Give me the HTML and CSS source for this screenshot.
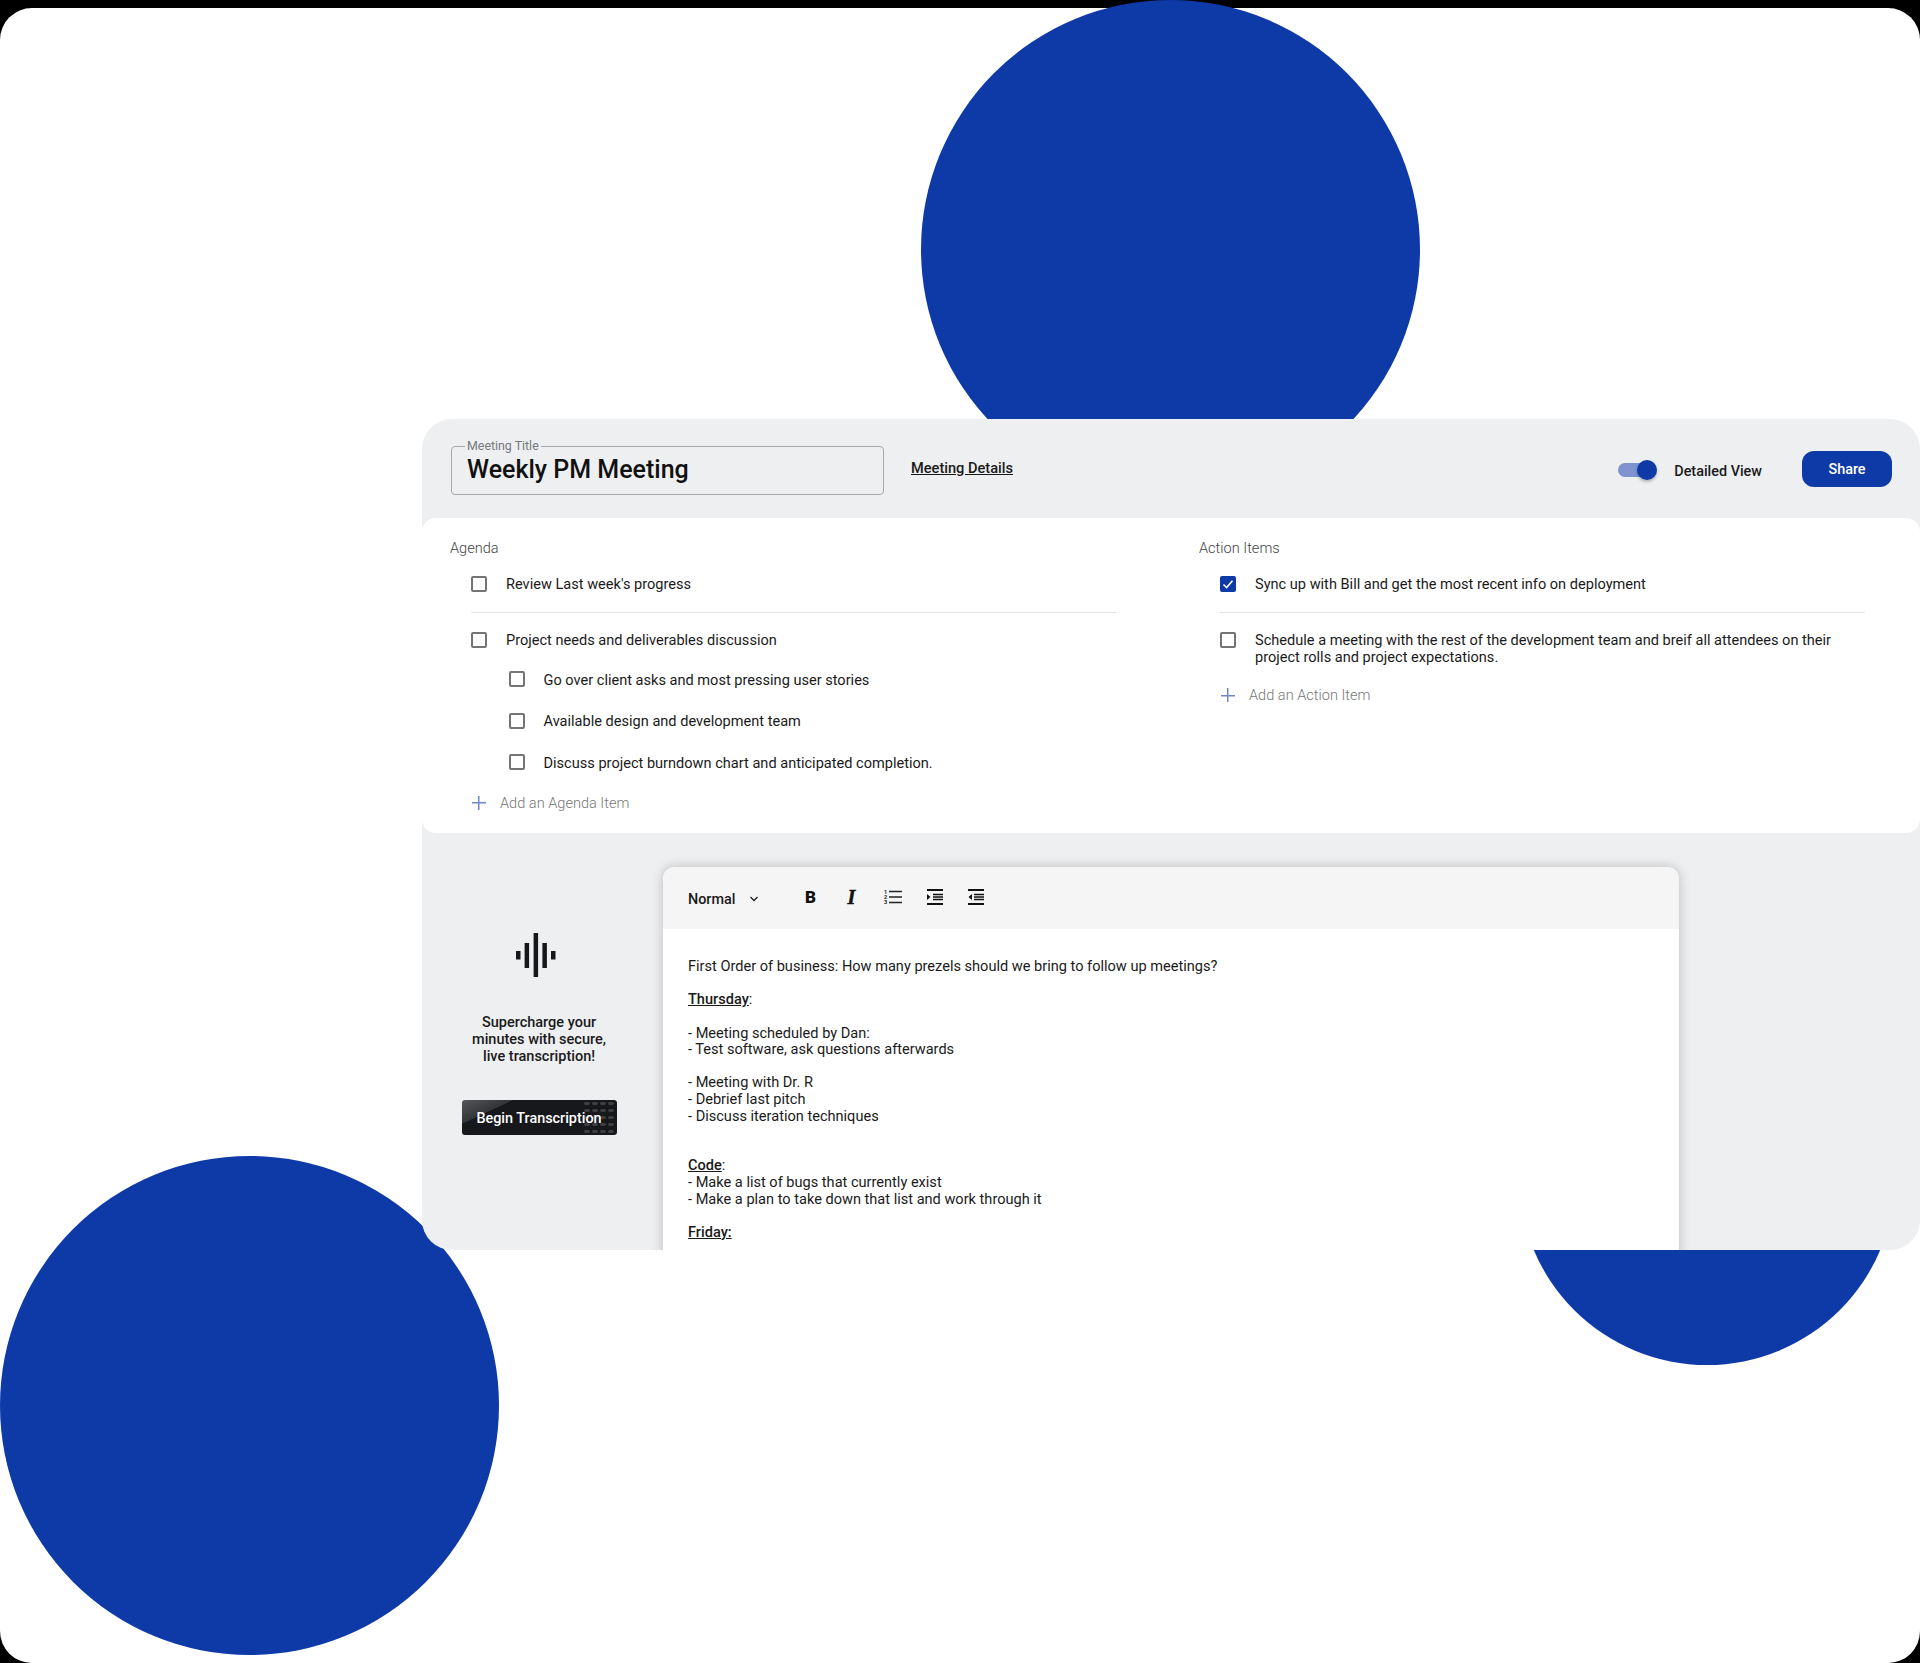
FILE: index.html
```html
<!DOCTYPE html>
<html lang="en">
<head>
    <meta charset="UTF-8">
    <meta name="viewport" content="width=device-width, initial-scale=1.0">
    <title>Weekly PM Meeting</title>
    <link rel="stylesheet" href="styles.css">
</head>
<body>
    <div class="stage">
        <div class="circle circle-top"></div>
        <div class="circle circle-left"></div>
        <div class="circle circle-right"></div>

        <div class="screen">
            <main class="panel">
                <header class="topbar">
                    <fieldset class="title-field">
                        <legend>Meeting Title</legend>
                        <div class="title-text">Weekly PM Meeting</div>
                    </fieldset>
                    <a class="details-link" href="#">Meeting Details</a>
                    <div class="toggle"><span class="toggle-knob"></span></div>
                    <span class="toggle-label">Detailed View</span>
                    <button class="share-btn">Share</button>
                </header>

                <section class="lists">
                    <div class="col">
                        <div class="col-label">Agenda</div>
                        <div class="list">
                            <div class="row"><span class="check"></span>Review Last week's progress</div>
                            <div class="divider"></div>
                            <div class="row after-divider"><span class="check"></span>Project needs and deliverables discussion</div>
                            <div class="row sub first-sub"><span class="check"></span>Go over client asks and most pressing user stories</div>
                            <div class="row sub"><span class="check"></span>Available design and development team</div>
                            <div class="row sub"><span class="check"></span>Discuss project burndown chart and anticipated completion.</div>
                            <div class="add-row add-agenda"><span class="plus"></span>Add an Agenda Item</div>
                        </div>
                    </div>
                    <div class="col">
                        <div class="col-label">Action Items</div>
                        <div class="list">
                            <div class="row">
                                <span class="check checked">
                                    <svg width="12" height="12" viewBox="0 0 12 12"><path d="M1.5 6.5 4.6 9.5 10.5 2.8" fill="none" stroke="#fff" stroke-width="1.6"/></svg>
                                </span>Sync up with Bill and get the most recent info on deployment
                            </div>
                            <div class="divider"></div>
                            <div class="row after-divider"><span class="check"></span><span>Schedule a meeting with the rest of the development team and breif all attendees on their project rolls and project expectations.</span></div>
                            <div class="add-row add-action"><span class="plus"></span>Add an Action Item</div>
                        </div>
                    </div>
                </section>

                <section class="lower">
                    <aside class="transcribe">
                        <svg class="wave" width="40" height="44" viewBox="0 0 40 44">
                            <rect x="0" y="18" width="4.5" height="8.5" />
                            <rect x="8.6" y="10" width="4.5" height="25" />
                            <rect x="17.6" y="0" width="4.5" height="44" />
                            <rect x="26.4" y="10" width="4.5" height="25" />
                            <rect x="35" y="18" width="4.5" height="8.5" />
                        </svg>
                        <p class="pitch">Supercharge your<br>minutes with secure,<br>live transcription!</p>
                        <button class="begin-btn">Begin Transcription</button>
                    </aside>

                    <div class="editor">
                        <div class="toolbar">
                            <span class="format">Normal</span>
                            <svg class="chevron" width="10" height="6" viewBox="0 0 10 6"><path d="M1.5 1 5 4.5 8.5 1" fill="none" stroke="#222" stroke-width="1.3"/></svg>
                            <span class="tool tool-b">B</span>
                            <span class="tool tool-i">I</span>
                            <svg class="tool-icon tool-list" width="18" height="16" viewBox="0 0 18 16">
                                <text x="0" y="4.6" class="tiny">1</text>
                                <text x="0" y="9.8" class="tiny">2</text>
                                <text x="0" y="15" class="tiny">3</text>
                                <path d="M5 2.5H18M5 8H18M5 13.5H18" stroke="#222" stroke-width="1.6"/>
                            </svg>
                            <svg class="tool-icon" width="16" height="16" viewBox="0 0 16 16">
                                <path d="M0 1H16M0 15H16" stroke="#111" stroke-width="2"/>
                                <path d="M6 5.500H16M6 8H16M6 10.500H16" stroke="#111" stroke-width="1.500"/>
                                <path d="M0 5 3.500 8 0 11Z" fill="#111"/>
                            </svg>
                            <svg class="tool-icon" width="16" height="16" viewBox="0 0 16 16">
                                <path d="M0 1H16M0 15H16" stroke="#111" stroke-width="2"/>
                                <path d="M6 5.500H16M6 8H16M6 10.500H16" stroke="#111" stroke-width="1.500"/>
                                <path d="M4 5 0.500 8 4 11Z" fill="#111"/>
                            </svg>
                        </div>
                        <div class="notes">
                            <p>First Order of business: How many prezels should we bring to follow up meetings?</p>
                            <p><b class="head">Thursday</b>:</p>
                            <p>- Meeting scheduled by Dan:<br>- Test software, ask questions afterwards</p>
                            <p>- Meeting with Dr. R<br>- Debrief last pitch<br>- Discuss iteration techniques</p>
                            <p class="gap-top"><b class="head">Code</b>:<br>- Make a list of bugs that currently exist<br>- Make a plan to take down that list and work through it</p>
                            <p><b class="head">Friday:</b></p>
                        </div>
                    </div>
                </section>
            </main>
        </div>
    </div>
</body>
</html>
```

FILE: styles.css
```css
* {
    box-sizing: border-box;
}
body {
    margin: 0;
    background-color: #000;
    font-family: Roboto, 'Liberation Sans', sans-serif;
    font-size: 14.57px;
    line-height: 16.6px;
    color: #1a1a1a;
}
.stage {
    position: relative;
    height: 1663px;
    padding-top: 8px;
    overflow: hidden;
}
.screen {
    height: 1655px;
    padding-top: 411px;
    padding-left: 422px;
    background-color: #fff;
    border-radius: 32px;
}

/* decorative circles */
.circle {
    position: absolute;
    border-radius: 50%;
    background-color: #0e3aa7;
}
.circle-top {
    left: 921px;
    top: 0;
    width: 499px;
    height: 499px;
}
.circle-left {
    left: 0;
    top: 1156px;
    width: 499px;
    height: 499px;
}
.circle-right {
    left: 1519px;
    top: 989px;
    width: 376px;
    height: 376px;
}

.panel {
    position: relative;
    z-index: 1;
    height: 831px;
    background-color: #eeeff1;
    border-radius: 30px;
    overflow: hidden;
}

/* top bar */
.topbar {
    display: flex;
    align-items: center;
    height: 99px;
    padding: 0 28px 0 29px;
}
.title-field {
    width: 433px;
    height: 55px;
    margin: 0;
    padding: 0 15px;
    border: 1px solid #a6a8ac;
    border-radius: 4px;
    position: relative;
    top: -1px;
}
.title-field legend {
    padding: 0 2px;
    margin-left: -2px;
    font-size: 12.4px;
    line-height: 12px;
    color: #77797d;
}
.title-text {
    font-size: 25px;
    font-weight: 500;
    line-height: 34px;
    color: #111;
    margin-top: 1px;
}
.details-link {
    margin-left: 27px;
    margin-top: -1px;
    font-size: 14.6px;
    font-weight: 500;
    color: #1a1a1a;
}
.toggle {
    position: relative;
    width: 39px;
    height: 14px;
    margin-left: auto;
    margin-top: 2px;
    border-radius: 7px 0 0 7px;
    background: linear-gradient(to right, #7e93cf 82%, transparent 82%);
}
.toggle-knob {
    position: absolute;
    right: 0;
    top: -3px;
    width: 20px;
    height: 20px;
    border-radius: 50%;
    background-color: #0e3aa7;
    box-shadow: 0 2px 3px rgba(0, 0, 0, 0.25);
}
.toggle-label {
    margin-left: 17px;
    margin-top: 7px;
    font-size: 14.4px;
    font-weight: 500;
}
.share-btn {
    width: 90px;
    height: 36px;
    margin-left: 40px;
    margin-top: 1.500px;
    border: none;
    border-radius: 12px;
    background-color: #0e3aa7;
    color: #fff;
    font-family: inherit;
    font-size: 14.4px;
    font-weight: 500;
}

/* agenda + action items */
.lists {
    display: grid;
    grid-template-columns: 749px 1fr;
    height: 315px;
    padding: 22px 0 0 28px;
    background-color: #fff;
    border-radius: 14px;
}
.col-label {
    font-weight: 300;
    line-height: 17px;
    color: #444;
}
.list {
    width: 645px;
    margin-left: 21px;
}
.row {
    display: flex;
    margin-top: 19.400px;
    padding-right: 20px;
}
.after-divider {
    margin-top: 19.200px;
}
.check {
    flex: none;
    display: flex;
    align-items: center;
    justify-content: center;
    width: 16px;
    height: 16px;
    margin-top: -0.400px;
    margin-right: 19px;
    border: 2px solid #757575;
    border-radius: 2px;
}
.checked {
    border: none;
    background-color: #0e3aa7;
}
.divider {
    height: 1px;
    margin-top: 18.800px;
    background-color: #e2e3e5;
}
.sub {
    margin-top: 25px;
    padding-left: 37.500px;
}
.first-sub {
    margin-top: 23px;
}
.add-row {
    display: flex;
    align-items: center;
    font-weight: 300;
    color: #777;
}
.add-agenda {
    margin-top: 24px;
}
.add-action {
    margin-top: 22.300px;
}
.plus {
    position: relative;
    flex: none;
    width: 14px;
    height: 14px;
    margin-top: -1px;
    margin-left: 1px;
    margin-right: 14px;
    background:
        linear-gradient(#6f87c9, #6f87c9) center / 100% 1.500px no-repeat,
        linear-gradient(#6f87c9, #6f87c9) center / 1.500px 100% no-repeat;
}

/* lower part */
.lower {
    display: flex;
}
.transcribe {
    display: flex;
    flex-direction: column;
    align-items: center;
    width: 234px;
    margin-right: 7px;
    padding-top: 100px;
}
.wave {
    margin-right: 7px;
    fill: #16171a;
}
.pitch {
    margin: 38.400px 0 0;
    text-align: center;
    font-size: 14.5px;
    font-weight: 500;
}
.begin-btn {
    position: relative;
    z-index: 0;
    width: 155px;
    height: 35px;
    margin-top: 35px;
    padding-top: 3px;
    border: none;
    border-radius: 3px;
    background: linear-gradient(155deg, #56575b 0, #333438 22%, #17181c 22.500%);
    color: #fff;
    font-family: inherit;
    font-size: 14.4px;
    font-weight: 500;
    overflow: hidden;
}
.begin-btn::after {
    content: "";
    position: absolute;
    z-index: -1;
    right: 2px;
    top: 0;
    width: 32px;
    height: 100%;
    background: radial-gradient(ellipse 3px 2px, #3d3e42 90%, transparent 100%) 0 0 / 8px 7px;
}
.editor {
    width: 1016px;
    height: 700px;
    margin-top: 34px;
    background-color: #fff;
    border-radius: 12px 12px 0 0;
    box-shadow: 0 0 12px rgba(0, 0, 0, 0.22);
}
.toolbar {
    display: flex;
    align-items: center;
    height: 62px;
    padding-left: 25px;
    background-color: #f5f5f6;
    border-radius: 12px 12px 0 0;
}
.format {
    width: 47px;
    margin-top: 4px;
    font-size: 14.4px;
    font-weight: 500;
}
.chevron {
    margin-left: 14px;
    margin-top: 1px;
}
.tool {
    margin-top: -2px;
    width: 14px;
    text-align: center;
    color: #111;
}
.tool-b {
    margin-left: 44.500px;
    font-size: 17px;
    font-weight: 900;
}
.tool-i {
    margin-left: 27px;
    font-family: 'Liberation Serif', serif;
    font-size: 20px;
    font-style: italic;
    font-weight: 700;
    -webkit-text-stroke: 0.5px #111;
}
.tool-icon {
    margin-left: 25px;
    margin-top: -2px;
}
.tool-list {
    margin-left: 25px;
}
.tiny {
    font-size: 5.500px;
    font-weight: 700;
    fill: #222;
}
.notes {
    padding: 29.200px 25px 0;
}
.notes p {
    margin: 0 0 16.6px;
}
.notes .gap-top {
    margin-top: 33.2px;
}
.head {
    font-weight: 500;
    text-decoration: underline;
}
```
